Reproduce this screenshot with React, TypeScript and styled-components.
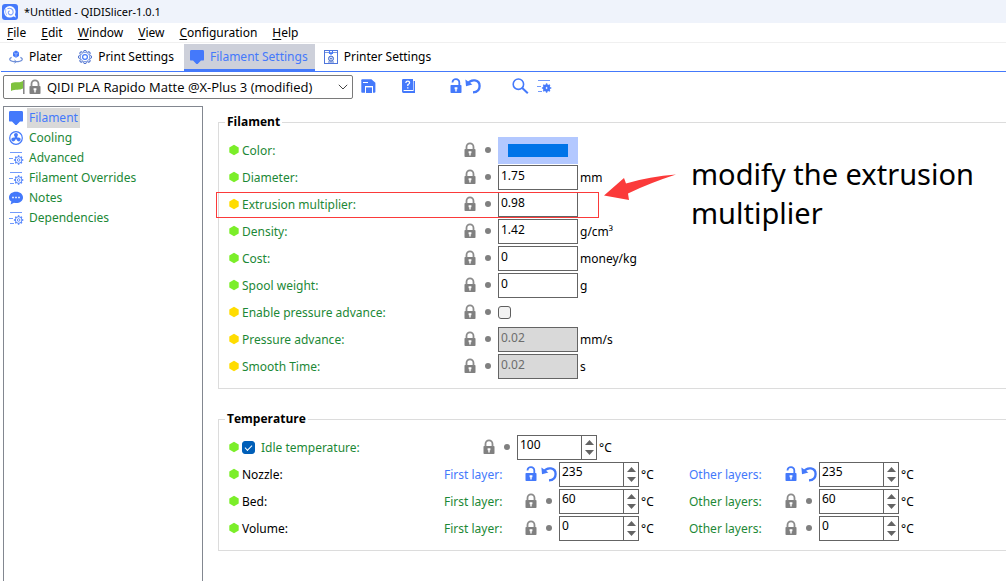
import React from 'react';
import styled, { createGlobalStyle, css } from 'styled-components';

const BLUE = '#4479fb';
const GREEN = '#1c8836';
const GREY = '#808080';
const LIME = '#7bee29';
const YELLOW = '#ffdc00';

const GlobalStyle = createGlobalStyle`
  *, *::before, *::after { box-sizing: border-box; }
  html, body, #root { height: 100%; }
  body {
    margin: 0;
    overflow: hidden;
    background: #fff;
    color: #000;
    font: 12px/18px "Noto Sans", "Open Sans", sans-serif;
  }
  button, input, select { font: inherit; color: inherit; margin: 0; padding: 0; }
  svg { display: block; flex: none; }
`;

/* ---------- icons ---------- */

const Lock = ({ open = false }: { open?: boolean }) => (
  <svg width="12" height="16" viewBox="0 0 12 16">
    <rect x="0.5" y="7" width="11" height="8" rx="0.8" fill={open ? BLUE : GREY} />
    <path
      d={open ? 'M2.5 4.4 V4.2 A3.3 3.1 0 0 1 9.3 4.4 V7' : 'M2.5 7.5 V4.9 A3.5 3.5 0 0 1 9.5 4.9 V7.5'}
      fill="none"
      stroke={open ? BLUE : '#8c8c8c'}
      strokeWidth="1.8"
    />
    <path d="M4.6 9.2 H7.4 V11.2 H6.7 V13.4 H5.3 V11.2 H4.6Z" fill="#fff" />
  </svg>
);

const Undo = () => (
  <svg width="16" height="16" viewBox="0 0 16 16">
    <path d="M3 5.4 C6 0.8 14.6 1.2 14.6 8 C14.6 12 12 14.2 8 14.4" fill="none" stroke={BLUE} strokeWidth="2.3" />
    <path d="M0.4 1.4 L1 8.2 L7.4 6.4Z" fill={BLUE} />
  </svg>
);

const Dot = () => (
  <svg width="16" height="16" viewBox="0 0 16 16">
    <circle cx="8" cy="8" r="3" fill={GREY} />
  </svg>
);

const Marker = styled.svg`
  margin-bottom: 2px;
`;

const Hexagon = ({ color }: { color: string }) => (
  <Marker width="10" height="12" viewBox="0 0 10 12">
    <path d="M5 0.8 L9.7 3.4 V8.6 L5 11.2 L0.3 8.6 V3.4Z" fill={color} />
  </Marker>
);

const Badge = () => (
  <svg width="14" height="14" viewBox="0 0 14 14">
    <path d="M1.4 0 H12.6 Q14 0 14 1.4 V9.4 Q14 10.6 12.8 10.6 H11 L7.6 14 H6.4 L3 10.6 H1.2 Q0 10.6 0 9.4 V1.4 Q0 0 1.4 0Z" fill={BLUE} />
  </svg>
);

const Fan = () => (
  <svg width="14" height="14" viewBox="0 0 14 14">
    <circle cx="7" cy="7" r="6.3" fill="none" stroke={BLUE} strokeWidth="1.2" />
    {[0, 120, 240].map((a) => (
      <path key={a} transform={`rotate(${a} 7 7)`} d="M6.4 6.4 C4.4 4.6 4.6 2 7 1.9 C9.4 2 9.4 4.6 7.6 6.4Z" fill={BLUE} />
    ))}
    <circle cx="7" cy="7" r="1.3" fill={BLUE} />
  </svg>
);

const spokes = [0, 45, 90, 135, 180, 225, 270, 315];

const LinesGear = ({ solid = false }: { solid?: boolean }) => (
  <svg width="15" height="14" viewBox="0 0 15 14">
    <path d="M1 1.5 H13 M0 7.5 H4 M1 12.5 H5" stroke={BLUE} strokeWidth="1" opacity="0.75" />
    {spokes.map((a) => (
      <rect key={a} x="8.9" y="4.3" width="1.4" height="1.6" fill={BLUE} transform={`rotate(${a} 9.6 9)`} />
    ))}
    <circle cx="9.6" cy="9" r="3.3" fill={solid ? BLUE : '#fff'} stroke={BLUE} strokeWidth="0.9" />
    <circle cx="9.6" cy="9" r="1.3" fill={solid ? '#fff' : 'none'} stroke={BLUE} strokeWidth="0.8" />
  </svg>
);

const Chat = () => (
  <svg width="14" height="14" viewBox="0 0 14 14">
    <path d="M7 0.8 C11 0.8 14 3.2 14 6.4 C14 9.6 11 12 7 12 C6.2 12 5.6 11.9 5 11.8 L1.6 13.6 L2.4 10.6 C0.8 9.6 0 8.2 0 6.4 C0 3.2 3 0.8 7 0.8Z" fill={BLUE} />
    <path d="M3.2 6.5 H4.8 M6.2 6.5 H7.8 M9.2 6.5 H10.8" stroke="#fff" strokeWidth="1.6" />
  </svg>
);

const AppLogo = () => (
  <svg width="16" height="16" viewBox="0 0 16 16">
    <rect width="16" height="16" rx="3" fill={BLUE} />
    <circle cx="7.8" cy="7.8" r="5.8" fill="#fff" />
    <path d="M5.4 4.8 C8 3.4 11.4 5 11.2 8.2 C11 10.8 8.4 11.6 6.8 10 C5.6 8.6 6.4 7 7.8 7" fill="none" stroke="#7ea2ff" strokeWidth="1.1" />
    <path d="M3.8 5 Q2.8 8.4 4.8 11.2" fill="none" stroke="#9cb8ff" strokeWidth="0.9" />
    <path d="M10.2 11.8 L14 13.4 L12.6 10Z" fill="#fff" />
  </svg>
);

const PlaterIcon = () => (
  <svg width="14" height="14" viewBox="0 0 14 14">
    <path d="M7 0.6 L10 2.2 V6 L7 7.8 L4 6 V2.2Z" fill={BLUE} />
    <path d="M4.4 2.6 L7 4 L9.6 2.6 M7 4 V7.4" fill="none" stroke="#b5c8f8" strokeWidth="0.7" />
    <path d="M2.6 7.4 C-0.8 8.8 0.4 11.6 7 11.6 C13.6 11.6 14.8 8.8 11.4 7.4" fill="none" stroke="#6f8fd8" strokeWidth="1.2" />
    <path d="M5.4 10 L7.4 11.6 L5.4 13.2" fill="none" stroke="#6f8fd8" strokeWidth="1" />
  </svg>
);

const CogIcon = () => (
  <svg width="14" height="14" viewBox="0 0 14 14">
    {spokes.map((a) => (
      <path key={a} d="M5.5 2.2 L6 0.5 H8 L8.5 2.2" fill="#fff" stroke="#5577d0" strokeWidth="1" transform={`rotate(${a} 7 7)`} />
    ))}
    <circle cx="7" cy="7" r="4.7" fill="#fff" stroke="#7c98e0" strokeWidth="1" />
    <circle cx="7" cy="7" r="2.4" fill="none" stroke={BLUE} strokeWidth="1.2" />
  </svg>
);

const PrinterIcon = () => (
  <svg width="14" height="14" viewBox="0 0 14 14">
    <rect x="0.5" y="0.5" width="13" height="13" fill="none" stroke="#4f76dc" />
    <path d="M1 2.5 H13" stroke="#7c98e0" />
    <path d="M5.5 1 V3.5 H8.5 V1 M7 3 V5" fill="none" stroke={BLUE} strokeWidth="1.1" />
    <circle cx="7" cy="8.6" r="2.5" fill="#d5e0fb" stroke="#3f66c8" strokeWidth="1" />
    <path d="M5.8 7.8 L7 9.2 L8.4 7.8 M4 12 H10" fill="none" stroke="#3f66c8" strokeWidth="0.9" />
  </svg>
);

const SaveIcon = () => (
  <svg width="15" height="14" viewBox="0 0 15 14">
    <path d="M0.3 1.2 Q0.3 0.3 1.2 0.3 H10.4 L14.4 3.8 V13 Q14.4 13.8 13.4 13.8 H1.2 Q0.3 13.8 0.3 13Z" fill={BLUE} />
    <path d="M2 3.5 H7" stroke="#fff" strokeWidth="1" />
    <path d="M4 14 V7 H12 V14" fill="#fff" />
    <path d="M5 14 V8.4 H11 V14Z" fill={BLUE} />
  </svg>
);

const ManualIcon = () => (
  <svg width="13" height="14" viewBox="0 0 13 14">
    <path d="M1.2 0 H11 V11 H1.6 V12 H11.6 V2 H13 V14 H1.4 Q0 14 0 12.6 V1.2 Q0 0 1.2 0Z" fill={BLUE} />
    <path d="M3.8 4 Q4 2.2 5.8 2.2 Q7.6 2.2 7.6 3.8 Q7.6 4.8 5.8 5.8 V7 M5.8 8.2 V9.6" fill="none" stroke="#fff" strokeWidth="1.3" />
  </svg>
);

const SearchIcon = () => (
  <svg width="17" height="16" viewBox="0 0 17 16">
    <circle cx="6.4" cy="6.2" r="5.2" fill="none" stroke={BLUE} strokeWidth="1.6" />
    <path d="M10.2 10 L15.8 15.2" stroke={BLUE} strokeWidth="2" />
  </svg>
);

const Flag = () => (
  <svg width="14" height="16" viewBox="0 0 14 16">
    <path d="M0 4.4 C4 2.2 7 4.6 12 2 V9.6 C8 11.8 4.6 9.4 0 12Z" fill="#7fc23f" />
    <path d="M12.8 1 V15" stroke="#7a7a7a" strokeWidth="1.4" />
  </svg>
);

const Chevron = () => (
  <svg width="10" height="6" viewBox="0 0 10 6">
    <path d="M0.8 0.8 L5 5 L9.2 0.8" fill="none" stroke="#444" />
  </svg>
);

/* ---------- window frame ---------- */

const Window = styled.div`
  display: flex;
  flex-direction: column;
  height: 100%;
  overflow: hidden;
`;

const TitleBar = styled.header`
  display: flex;
  align-items: center;
  gap: 6px;
  height: 23px;
  padding-left: 2px;
  background: #eff3fb;
  font-size: 11px;
`;

const MenuBar = styled.nav`
  display: flex;
  align-items: flex-end;
  gap: 1px;
  height: 20px;
  border-bottom: 1px solid #f0f0f0;
`;

const MenuItem = styled.button`
  padding: 0 7px;
  border: 0;
  background: none;
  line-height: 18px;
  u { text-underline-offset: 2px; }
`;

const TabBar = styled.nav`
  display: flex;
  gap: 3px;
  height: 29px;
  margin-left: 1px;
  padding: 1px 0 0 2px;
  border-bottom: 1px solid ${BLUE};
`;

const Tab = styled.button<{ $active?: boolean }>`
  display: flex;
  align-items: center;
  gap: 6px;
  padding: 0 7px 0 6px;
  border: 0;
  border-bottom: 2px solid transparent;
  background: none;
  ${(p) => p.$active && css`
    background: #cdd0da;
    border-color: ${BLUE};
    color: ${BLUE};
  `}
`;

const Toolbar = styled.div`
  display: flex;
  align-items: center;
  height: 30px;
  padding: 0 0 2px 3px;
`;

const PresetBox = styled.label`
  display: flex;
  align-items: center;
  gap: 4px;
  width: 350px;
  height: 24px;
  margin-top: 2px;
  padding: 0 4px 0 7px;
  border: 1px solid #7a7a7a;
  border-radius: 2px;
  svg { margin-bottom: 1px; }
`;

const PresetSelect = styled.select`
  flex: 1;
  min-width: 0;
  margin-left: 2px;
  padding-bottom: 1px;
  border: 0;
  outline: 0;
  appearance: none;
  background: none;
  font: 13px/20px "Open Sans", "Noto Sans", sans-serif;
`;

const ToolGroup = styled.div<{ $space: number }>`
  display: flex;
  align-items: center;
  gap: 3px;
  margin-left: ${(p) => p.$space}px;
`;

const ToolButton = styled.button`
  display: flex;
  border: 0;
  background: none;
`;

const Body = styled.div`
  display: flex;
  flex: 1;
  min-height: 0;
  padding-top: 4px;
`;

const Sidebar = styled.nav`
  flex: none;
  width: 200px;
  margin-left: 3px;
  padding: 1px 5px;
  border: 1px solid #828790;
  border-bottom: 0;
`;

const PageButton = styled.button<{ $active?: boolean }>`
  display: flex;
  align-items: center;
  gap: 4px;
  height: 20px;
  border: 0;
  background: none;
  color: ${(p) => (p.$active ? BLUE : GREEN)};
  span {
    padding: 0 2px;
    line-height: 20px;
    background: ${(p) => (p.$active ? '#d9d9d9' : 'none')};
  }
`;

const IconSlot = styled.i`
  display: flex;
  width: 14px;
`;

const Content = styled.main`
  flex: 1;
  min-width: 0;
  overflow: hidden;
  padding: 7px 0 0 15px;
`;

/* ---------- option groups ---------- */

const Group = styled.fieldset`
  min-width: 0;
  margin: 0 -4px 21px 0;
  padding: 6px 0 8px 10px;
  border: 1px solid #dcdcdc;
`;

const Legend = styled.legend`
  margin-left: -4px;
  padding: 0 2px;
  font: bold 12px/18px "Open Sans", "Noto Sans", sans-serif;
`;

const Row = styled.div`
  position: relative;
  display: flex;
  align-items: center;
  height: 27px;
`;

const Name = styled.label<{ $width: number; $color?: string }>`
  display: flex;
  align-items: center;
  gap: 3px;
  width: ${(p) => p.$width}px;
  color: ${(p) => p.$color ?? GREEN};
`;

const Field = styled.div<{ $width?: number }>`
  display: flex;
  align-items: center;
  width: ${(p) => (p.$width ? `${p.$width}px` : 'auto')};
`;

const State = styled.span`
  display: flex;
  gap: 4px;
  margin-right: 2px;
  padding-bottom: 2px;
`;

const TextInput = styled.input`
  width: 80px;
  height: 25px;
  padding: 0 2px 5px;
  border: 1px solid #646464;
  border-radius: 0;
  outline: 0;
  background: #fff;
  &:disabled { background: #d9d9d9; color: #6d6d6d; }
`;

const Swatch = styled.button`
  width: 80px;
  height: 27px;
  border: solid #b3c8ff;
  border-width: 7px 10px;
  background: #0074e8;
`;

const Check = styled.input`
  appearance: none;
  display: grid;
  place-items: center;
  width: 13px;
  height: 13px;
  border: 1px solid #5f5f5f;
  border-radius: 3px;
  background: #f3f3f3;
  &:checked { border-color: #005fb8; background: #005fb8; }
  &:checked::after {
    content: '';
    width: 7px;
    height: 4px;
    margin-bottom: 2px;
    border: solid #fff;
    border-width: 0 0 1px 1px;
    transform: rotate(-45deg);
  }
`;

const IdleName = styled.span`
  margin-left: 3px;
`;

const Spin = styled.div`
  display: flex;
  width: 80px;
  height: 25px;
  border: 1px solid #646464;
`;

const SpinInput = styled.input`
  flex: 1;
  min-width: 0;
  padding: 0 2px 5px;
  border: 0;
  outline: 0;
`;

const SpinButtons = styled.div`
  display: flex;
  flex-direction: column;
  width: 15px;
  padding: 1px 0;
  border-left: 1px solid #646464;
  button {
    display: flex;
    flex: 1;
    align-items: center;
    justify-content: center;
    border: 0;
    background: none;
  }
`;

const Unit = styled.span`
  margin-left: 2px;
`;

/* ---------- annotation over the form ---------- */

const Highlight = styled.div`
  position: absolute;
  left: -13px;
  top: 1px;
  width: 383px;
  height: 26px;
  border: 1px solid #fb3a3a;
  pointer-events: none;
`;

const Callout = styled.div`
  position: absolute;
  left: 375px;
  top: -37px;
  display: flex;
  pointer-events: none;
  p {
    width: 310px;
    margin: 0 0 0 15px;
    font-size: 29px;
    line-height: 39px;
  }
  svg { margin-top: 19px; }
`;

const Arrow = () => (
  <svg width="72" height="28" viewBox="0 0 72 28">
    <path d="M0 22.5 L20 5 L22 10.5 Q46 3.5 72 1.6 Q46 10 24 20.5 L25 27Z" fill="#fb3a3a" />
  </svg>
);

const FieldState = ({ modified = false }: { modified?: boolean }) => (
  <State>
    <Lock open={modified} />
    {modified ? <Undo /> : <Dot />}
  </State>
);

const SpinField = ({ id, value }: { id: string; value: string }) => (
  <>
    <Spin>
      <SpinInput id={id} defaultValue={value} />
      <SpinButtons>
        <button aria-label="Increase">
          <svg width="9" height="5" viewBox="0 0 9 5"><path d="M4.5 0 L9 5 H0Z" fill="#646464" /></svg>
        </button>
        <button aria-label="Decrease">
          <svg width="9" height="5" viewBox="0 0 9 5"><path d="M0 0 H9 L4.5 5Z" fill="#646464" /></svg>
        </button>
      </SpinButtons>
    </Spin>
    <Unit>°C</Unit>
  </>
);

type Option = {
  id: string;
  label: string;
  marker: string;
  kind?: 'color' | 'check';
  value?: string;
  unit?: string;
  disabled?: boolean;
  marked?: boolean;
};

const options: Option[] = [
  { id: 'color', label: 'Color:', marker: LIME, kind: 'color' },
  { id: 'diameter', label: 'Diameter:', marker: LIME, value: '1.75', unit: 'mm' },
  { id: 'extrusion', label: 'Extrusion multiplier:', marker: YELLOW, value: '0.98', marked: true },
  { id: 'density', label: 'Density:', marker: LIME, value: '1.42', unit: 'g/cm³' },
  { id: 'cost', label: 'Cost:', marker: LIME, value: '0', unit: 'money/kg' },
  { id: 'spool', label: 'Spool weight:', marker: LIME, value: '0', unit: 'g' },
  { id: 'enable-pa', label: 'Enable pressure advance:', marker: YELLOW, kind: 'check' },
  { id: 'pa', label: 'Pressure advance:', marker: YELLOW, value: '0.02', unit: 'mm/s', disabled: true },
  { id: 'smooth', label: 'Smooth Time:', marker: YELLOW, value: '0.02', unit: 's', disabled: true },
];

const temperatures = [
  { name: 'Nozzle', value: '235', modified: true },
  { name: 'Bed', value: '60', modified: false },
  { name: 'Volume', value: '0', modified: false },
];

const pages = [
  { name: 'Filament', icon: <Badge /> },
  { name: 'Cooling', icon: <Fan /> },
  { name: 'Advanced', icon: <LinesGear /> },
  { name: 'Filament Overrides', icon: <LinesGear /> },
  { name: 'Notes', icon: <Chat /> },
  { name: 'Dependencies', icon: <LinesGear /> },
];

const tabs = [
  { name: 'Plater', icon: <PlaterIcon /> },
  { name: 'Print Settings', icon: <CogIcon /> },
  { name: 'Filament Settings', icon: <Badge /> },
  { name: 'Printer Settings', icon: <PrinterIcon /> },
];

const menus = ['File', 'Edit', 'Window', 'View', 'Configuration', 'Help'];

export default function App() {
  return (
    <Window>
      <GlobalStyle />
      <TitleBar>
        <AppLogo />
        <span>*Untitled - QIDISlicer-1.0.1</span>
      </TitleBar>
      <MenuBar>
        {menus.map((m) => (
          <MenuItem key={m}><u>{m[0]}</u>{m.slice(1)}</MenuItem>
        ))}
      </MenuBar>
      <TabBar>
        {tabs.map((t) => (
          <Tab key={t.name} $active={t.name === 'Filament Settings'}>{t.icon}{t.name}</Tab>
        ))}
      </TabBar>
      <Toolbar>
        <PresetBox>
          <Flag />
          <Lock />
          <PresetSelect aria-label="Filament preset">
            <option>QIDI PLA Rapido Matte @X-Plus 3 (modified)</option>
          </PresetSelect>
          <Chevron />
        </PresetBox>
        <ToolGroup $space={8}><ToolButton aria-label="Save preset"><SaveIcon /></ToolButton></ToolGroup>
        <ToolGroup $space={26}><ToolButton aria-label="Help"><ManualIcon /></ToolButton></ToolGroup>
        <ToolGroup $space={35}>
          <ToolButton aria-label="Unlock"><Lock open /></ToolButton>
          <ToolButton aria-label="Undo changes"><Undo /></ToolButton>
        </ToolGroup>
        <ToolGroup $space={31}><ToolButton aria-label="Search"><SearchIcon /></ToolButton></ToolGroup>
        <ToolGroup $space={8}><ToolButton aria-label="Compare presets"><LinesGear solid /></ToolButton></ToolGroup>
      </Toolbar>
      <Body>
        <Sidebar>
          {pages.map((p) => (
            <PageButton key={p.name} $active={p.name === 'Filament'}>
              <IconSlot>{p.icon}</IconSlot>
              <span>{p.name}</span>
            </PageButton>
          ))}
        </Sidebar>
        <Content>
          <Group>
            <Legend>Filament</Legend>
            {options.map((o) => (
              <Row key={o.id}>
                <Name htmlFor={o.id} $width={235}><Hexagon color={o.marker} />{o.label}</Name>
                <Field>
                  <FieldState />
                  {o.kind === 'color' && <Swatch id={o.id} />}
                  {o.kind === 'check' && <Check id={o.id} type="checkbox" />}
                  {!o.kind && <TextInput id={o.id} defaultValue={o.value} disabled={o.disabled} />}
                  {o.unit && <Unit>{o.unit}</Unit>}
                </Field>
                {o.marked && (
                  <>
                    <Highlight />
                    <Callout><Arrow /><p>modify the extrusion multiplier</p></Callout>
                  </>
                )}
              </Row>
            ))}
          </Group>
          <Group>
            <Legend>Temperature</Legend>
            <Row>
              <Name $width={254}>
                <Hexagon color={LIME} />
                <Check type="checkbox" defaultChecked />
                <IdleName>Idle temperature:</IdleName>
              </Name>
              <FieldState />
              <SpinField id="idle" value="100" />
            </Row>
            {temperatures.map((t) => (
              <Row key={t.name}>
                <Name as="span" $width={215} $color="#000"><Hexagon color={LIME} />{t.name}:</Name>
                <Name htmlFor={`${t.name}-first`} $width={81} $color={t.modified ? BLUE : GREEN}>First layer:</Name>
                <Field $width={164}>
                  <FieldState modified={t.modified} />
                  <SpinField id={`${t.name}-first`} value={t.value} />
                </Field>
                <Name htmlFor={`${t.name}-other`} $width={96} $color={t.modified ? BLUE : GREEN}>Other layers:</Name>
                <Field>
                  <FieldState modified={t.modified} />
                  <SpinField id={`${t.name}-other`} value={t.value} />
                </Field>
              </Row>
            ))}
          </Group>
        </Content>
      </Body>
    </Window>
  );
}
